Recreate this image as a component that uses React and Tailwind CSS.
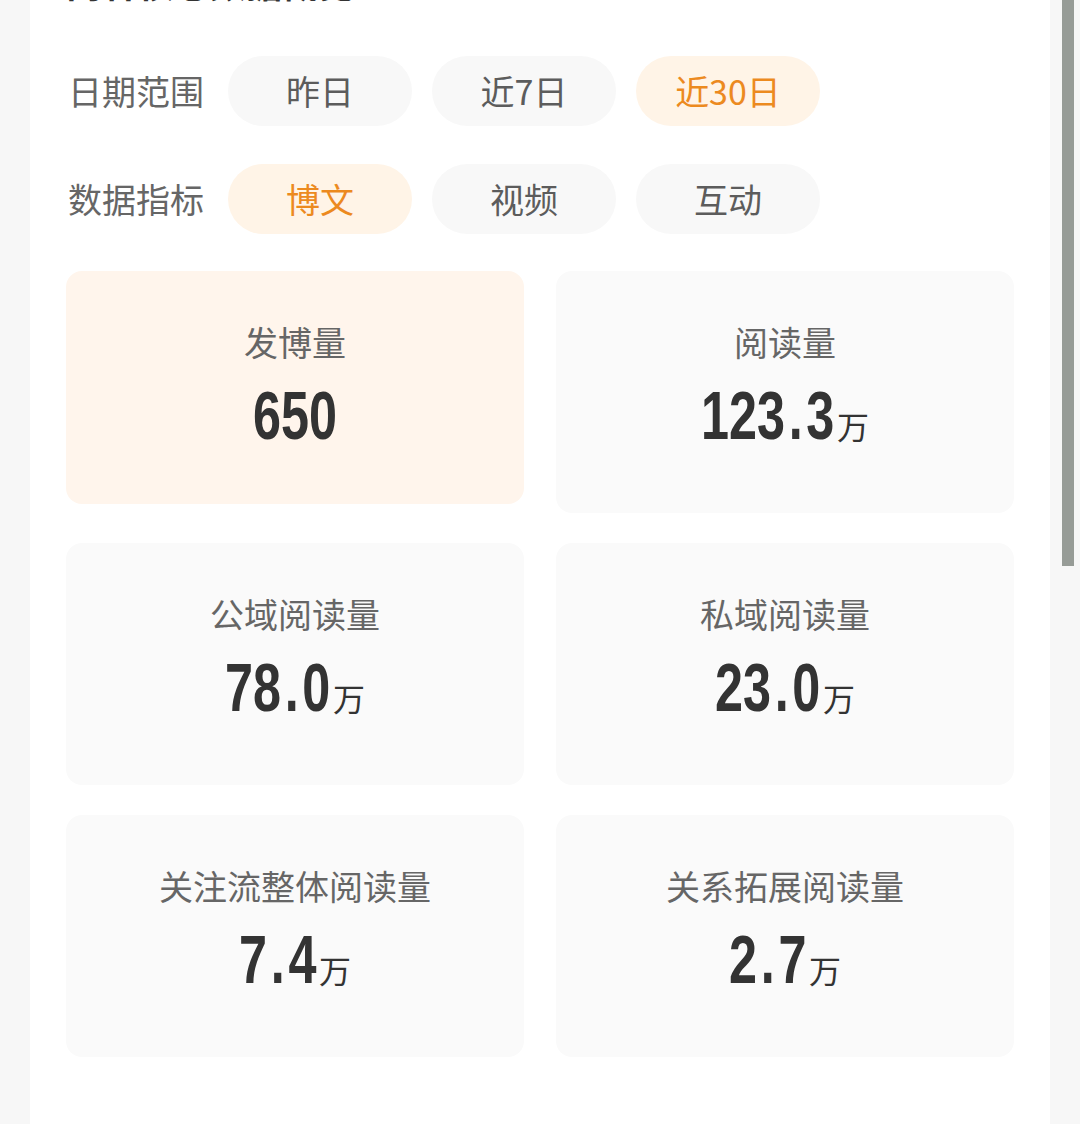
import React, { useState } from "react";

const CJK = { fontFamily: '"Noto Sans CJK SC", "Noto Sans", sans-serif' };
const NUM = { fontFamily: '"Liberation Sans", Arial, sans-serif' };

const DATE_RANGES = ["昨日", "近7日", "近30日"];
const METRIC_TABS = ["博文", "视频", "互动"];

const STATS = [
  { label: "发博量", value: "650", unit: "", active: true },
  { label: "阅读量", value: "123.3", unit: "万" },
  { label: "公域阅读量", value: "78.0", unit: "万" },
  { label: "私域阅读量", value: "23.0", unit: "万" },
  { label: "关注流整体阅读量", value: "7.4", unit: "万" },
  { label: "关系拓展阅读量", value: "2.7", unit: "万" },
];

// no condensed face installed, so squeeze Liberation Sans Bold and size the box to match
const NUM_SIZE = 68;
const SQUEEZE = 0.74;
const DOT_PAD = 10; // mx-[5px] on the period, before squeezing
function squeezedWidth(str) {
  let px = 0;
  for (const ch of str) px += ch === "." ? 0.278 * NUM_SIZE + DOT_PAD : 0.556 * NUM_SIZE;
  return Math.round(px * SQUEEZE);
}

function FilterRow({ label, options, value, onChange }) {
  return (
    <div className="flex items-center">
      <div className="w-[162px] text-[34px] text-[#666] leading-none pl-[2px]">{label}</div>
      <div className="flex gap-5">
        {options.map(opt => (
          <button key={opt} onClick={() => onChange(opt)}
            className={`w-[184px] h-[70px] rounded-full text-[34px] leading-none ${opt === value ? "bg-[#fff4e7] text-[#ec8a1f]" : "bg-[#f8f8f8] text-[#5c5c5c]"}`}>
            {opt}
          </button>
        ))}
      </div>
    </div>
  );
}

function StatCard({ stat }) {
  const [int, dec] = stat.value.split(".");
  return (
    <div className={`rounded-2xl flex flex-col items-center pt-[48px] ${stat.active ? "bg-[#fff5ec] h-[233px]" : "bg-[#fafafa] h-[242px]"}`}>
      <div className="text-[34px] leading-[46px] text-[#666]">{stat.label}</div>
      <div className="flex items-baseline mt-[16px] text-[#333]">
        <span className="inline-block whitespace-nowrap" style={{ width: squeezedWidth(stat.value) }}>
          <span className="inline-block origin-left scale-x-[0.74] text-[68px] leading-[68px] font-bold" style={NUM}>
            {int}
            {dec !== undefined && <><span className="mx-[5px]">.</span>{dec}</>}
          </span>
        </span>
        {stat.unit && <span className="text-[32px] leading-none ml-[3px]">{stat.unit}</span>}
      </div>
    </div>
  );
}

export default function App() {
  const [range, setRange] = useState("近30日");
  const [metric, setMetric] = useState("博文");

  return (
    <div className="relative min-h-[1124px] bg-[#f7f7f7] px-[30px] overflow-hidden" style={CJK}>
      <div className="bg-white min-h-[1124px] px-9">
        <div className="h-[56px] overflow-hidden">
          <h2 className="-mt-[38px] text-[36px] leading-[40px] font-bold text-[#333]">内容核心数据概览</h2>
        </div>
        <div className="flex flex-col gap-[38px]">
          <FilterRow label="日期范围" options={DATE_RANGES} value={range} onChange={setRange} />
          <FilterRow label="数据指标" options={METRIC_TABS} value={metric} onChange={setMetric} />
        </div>
        <div className="grid grid-cols-2 gap-x-8 gap-y-[30px] items-start mt-[37px]">
          {STATS.map(s => <StatCard key={s.label} stat={s} />)}
        </div>
      </div>
      <div className="absolute left-[1062px] top-0 w-[12px] h-[566px] bg-[#979c97]" />
    </div>
  );
}
